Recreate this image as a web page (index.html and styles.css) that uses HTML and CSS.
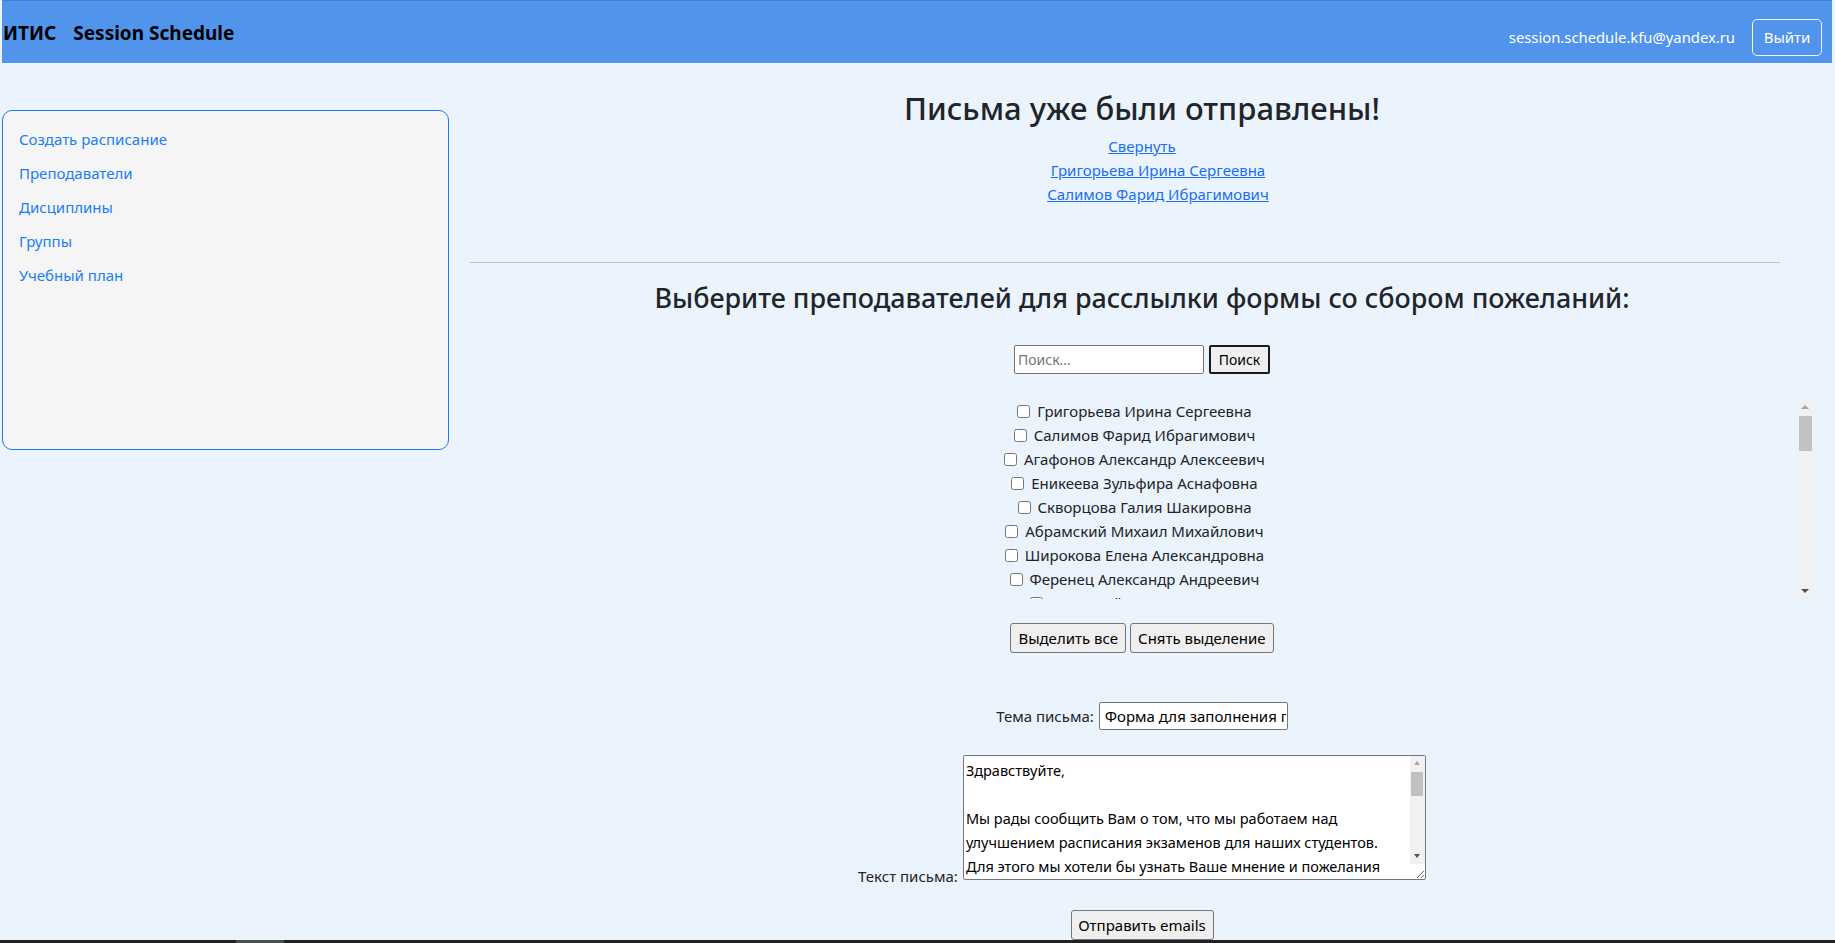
FILE: index.html
```html
<!DOCTYPE html>
<html lang="ru">
<head>
<meta charset="utf-8">
<title>Session Schedule</title>
<link rel="stylesheet" href="styles.css">
</head>
<body>
<header class="topbar">
  <div class="brand">
    <span class="brand-main">ИТИС</span>
    <span class="brand-sub">Session Schedule</span>
  </div>
  <div class="user">
    <span class="user-email">session.schedule.kfu@yandex.ru</span>
    <button class="logout" type="button">Выйти</button>
  </div>
</header>

<div class="layout">
  <aside class="sidebar">
    <a class="side-link" href="#">Создать расписание</a>
    <a class="side-link" href="#">Преподаватели</a>
    <a class="side-link" href="#">Дисциплины</a>
    <a class="side-link" href="#">Группы</a>
    <a class="side-link" href="#">Учебный план</a>
  </aside>

  <main class="main">
    <h2 class="title">Письма уже были отправлены!</h2>
    <div class="sent-links">
      <a class="collapse-link" href="#">Свернуть</a>
      <ul class="sent-list">
        <li><a href="#">Григорьева Ирина Сергеевна</a></li>
        <li><a href="#">Салимов Фарид Ибрагимович</a></li>
      </ul>
    </div>

    <hr class="divider">

    <h3 class="subtitle">Выберите преподавателей для расслылки формы со сбором пожеланий:</h3>

    <form class="search">
      <input class="search-input" type="text" placeholder="Поиск...">
      <button class="search-btn" type="button">Поиск</button>
    </form>

    <div class="teacher-box">
      <div class="teacher-list">
        <label class="teacher"><input type="checkbox"> Григорьева Ирина Сергеевна</label>
        <label class="teacher"><input type="checkbox"> Салимов Фарид Ибрагимович</label>
        <label class="teacher"><input type="checkbox"> Агафонов Александр Алексеевич</label>
        <label class="teacher"><input type="checkbox"> Еникеева Зульфира Аснафовна</label>
        <label class="teacher"><input type="checkbox"> Скворцова Галия Шакировна</label>
        <label class="teacher"><input type="checkbox"> Абрамский Михаил Михайлович</label>
        <label class="teacher"><input type="checkbox"> Широкова Елена Александровна</label>
        <label class="teacher"><input type="checkbox"> Ференец Александр Андреевич</label>
        <label class="teacher"><input type="checkbox"> Галиев Айрат Шамилевич</label>
        <label class="teacher"><input type="checkbox"> Мельникова Ольга Николаевна</label>
        <label class="teacher"><input type="checkbox"> Хасьянов Айрат Фаридович</label>
        <label class="teacher"><input type="checkbox"> Зайцев Михаил Андреевич</label>
      </div>
      <div class="vscroll list-scroll" aria-hidden="true">
        <span class="arrow arrow-up"></span>
        <span class="thumb"></span>
        <span class="track-fill"></span>
        <span class="arrow arrow-down"></span>
      </div>
    </div>

    <div class="select-btns">
      <button class="btn" type="button">Выделить все</button>
      <button class="btn" type="button">Снять выделение</button>
    </div>

    <div class="field subject-row">
      <label class="field-label" for="subj">Тема письма:</label>
      <input id="subj" class="subject-input" type="text" value="Форма для заполнения пожеланий">
    </div>

    <div class="field body-row">
      <label class="field-label body-label" for="body">Текст письма:</label>
      <div class="body-wrap">
        <textarea id="body" class="body-input">Здравствуйте,

Мы рады сообщить Вам о том, что мы работаем над улучшением расписания экзаменов для наших студентов. Для этого мы хотели бы узнать Ваше мнение и пожелания относительно расписания.</textarea>
        <div class="vscroll area-scroll" aria-hidden="true">
          <span class="arrow arrow-up"></span>
          <span class="thumb"></span>
          <span class="track-fill"></span>
          <span class="arrow arrow-down"></span>
        </div>
      </div>
    </div>

    <div class="send-row">
      <button class="btn send-btn" type="button">Отправить emails</button>
    </div>
  </main>
</div>

<div class="os-bar"><span class="os-bar-item"></span></div>
</body>
</html>
```

FILE: styles.css
```css
* { box-sizing: border-box; }

html, body {
  margin: 0;
  padding: 0;
}

body {
  background: #ebf3fd;
  font-family: "Noto Sans", "Open Sans", sans-serif;
  color: #212529;
  font-size: 15px;
  line-height: 24px;
  height: 943px;
  overflow: hidden;
}

.topbar {
  margin: 0 3px 0 2px;
  height: 63px;
  background: #5194eb;
  border-top: 1px solid #3f80d8;
  display: flex;
  align-items: center;
  justify-content: space-between;
  padding: 10px 10px 0 1px;
}

.brand {
  display: flex;
  align-items: center;
  gap: 17px;
  font-weight: 700;
  font-size: 19px;
  color: #000;
  margin-bottom: 8px;
}

.user {
  display: flex;
  align-items: center;
  gap: 17px;
}

.user-email {
  color: #fff;
  font-size: 14.8px;
}

.logout {
  height: 37px;
  width: 70px;
  background: transparent;
  border: 1px solid #f3f7fd;
  border-radius: 5px;
  color: #fff;
  font-family: inherit;
  font-size: 15px;
  padding: 0;
}

.layout {
  display: grid;
  grid-template-columns: 447px 1fr;
  padding-left: 2px;
}

.sidebar {
  margin-top: 47px;
  height: 340px;
  background: #f5f5f5;
  border: 1px solid #1a7ef5;
  border-radius: 10px;
  padding: 17px 16px;
  display: flex;
  flex-direction: column;
  gap: 12px;
}

.side-link {
  color: #1a7ef5;
  text-decoration: none;
  font-size: 15px;
  line-height: 22px;
}

.main {
  text-align: center;
  padding-top: 26px;
}

.title {
  margin: 0 0 7px;
  font-size: 31px;
  line-height: 38px;
  font-weight: 500;
}

.sent-links {
  display: flex;
  flex-direction: column;
  align-items: center;
}

.sent-links a {
  color: #1a6ef5;
  line-height: 24px;
  font-size: 15px;
}

.sent-list {
  list-style: none;
  margin: 0;
  padding: 0 0 0 32px;
  align-self: stretch;
}

.sent-list li {
  line-height: 24px;
}

.divider {
  margin: 56px 55px 18px 21px;
  border: 0;
  border-top: 1px solid #bcc0c7;
}

.subtitle {
  margin: 0;
  font-size: 26.9px;
  line-height: 34px;
  font-weight: 500;
}

.search {
  margin: 30px 0 0;
  display: flex;
  justify-content: center;
  gap: 5px;
}

.search-input {
  width: 190px;
  height: 29px;
  border: 1px solid #767676;
  border-radius: 2px;
  background: #fff;
  font-family: inherit;
  font-size: 14px;
  padding: 1px 3px;
}

.search-input::placeholder { color: #757575; }

.search-btn {
  width: 61px;
  height: 29px;
  background: #efefef;
  border: 2px solid #1a1a1a;
  border-radius: 2px;
  font-family: inherit;
  font-size: 14px;
  font-weight: 400;
  color: #000;
  padding: 0;
}

.teacher-box {
  margin: 25px 22px 0 19px;
  height: 200px;
  display: flex;
}

.teacher-list {
  flex: 1;
  overflow: hidden;
  display: flex;
  flex-direction: column;
  align-items: center;
}

.teacher {
  display: block;
  line-height: 24px;
  height: 24px;
  flex: none;
  white-space: nowrap;
}

.teacher input {
  margin: 0 3px 0 4px;
  vertical-align: -1px;
}

.vscroll {
  width: 16px;
  background: #f1f1f1;
  display: flex;
  flex-direction: column;
  align-items: center;
  flex: none;
}

.arrow {
  flex: none;
  width: 16px;
  height: 16px;
  position: relative;
}

.arrow::after {
  content: "";
  position: absolute;
  left: 4px;
  top: 6px;
  border-left: 4px solid transparent;
  border-right: 4px solid transparent;
}

.arrow-up::after { border-bottom: 4px solid #a3a3a3; }
.arrow-down::after { border-top: 4px solid #505050; }

.thumb {
  flex: none;
  width: 13px;
  height: 35px;
  margin-top: 1px;
  background: #c1c1c1;
}

.track-fill { flex: 1; }

.select-btns {
  margin-top: 24px;
  display: flex;
  justify-content: center;
  gap: 4px;
}

.btn {
  height: 30px;
  padding: 0 7px;
  background: #efefef;
  border: 1px solid #767676;
  border-radius: 3px;
  font-family: inherit;
  font-size: 15px;
  color: #000;
}

.field {
  display: flex;
  justify-content: center;
  gap: 5px;
}

.subject-row {
  margin-top: 49px;
  align-items: center;
}

.subject-input {
  width: 189px;
  height: 28px;
  border: 1px solid #767676;
  border-radius: 2px;
  background: #fff;
  font-family: inherit;
  font-size: 15px;
  padding: 1px 1px 1px 5px;
  color: #000;
}

.body-row {
  margin-top: 25px;
  align-items: flex-end;
}

.body-label {
  margin-bottom: -8px;
}

.body-wrap {
  position: relative;
  width: 463px;
  height: 125px;
}

.body-input {
  display: block;
  width: 463px;
  height: 125px;
  margin: 0;
  border: 1px solid #767676;
  border-radius: 2px;
  background: #fff;
  font-family: inherit;
  font-size: 14.5px;
  line-height: 24px;
  padding: 2px 17px 2px 2px;
  color: #000;
  resize: both;
  overflow: hidden;
}

.area-scroll {
  position: absolute;
  right: 1px;
  top: 1px;
  bottom: 16px;
  width: 15px;
}

.area-scroll .arrow { width: 15px; height: 15px; }
.area-scroll .arrow::after { left: 4px; top: 5px; border-left-width: 3.5px; border-right-width: 3.5px; }
.area-scroll .arrow-up::after { border-bottom-width: 4px; }
.area-scroll .arrow-down::after { border-top-width: 4px; }
.area-scroll .thumb { width: 12px; height: 24px; }

.send-row {
  margin-top: 30px;
  display: flex;
  justify-content: center;
}

.send-btn {
  width: 143px;
  padding: 0;
}

.os-bar {
  position: fixed;
  left: 0;
  right: 0;
  bottom: 0;
  height: 3px;
  background: #202124;
}

.os-bar-item {
  position: absolute;
  left: 236px;
  top: 0;
  width: 48px;
  height: 3px;
  background: #4b4e51;
}
```
